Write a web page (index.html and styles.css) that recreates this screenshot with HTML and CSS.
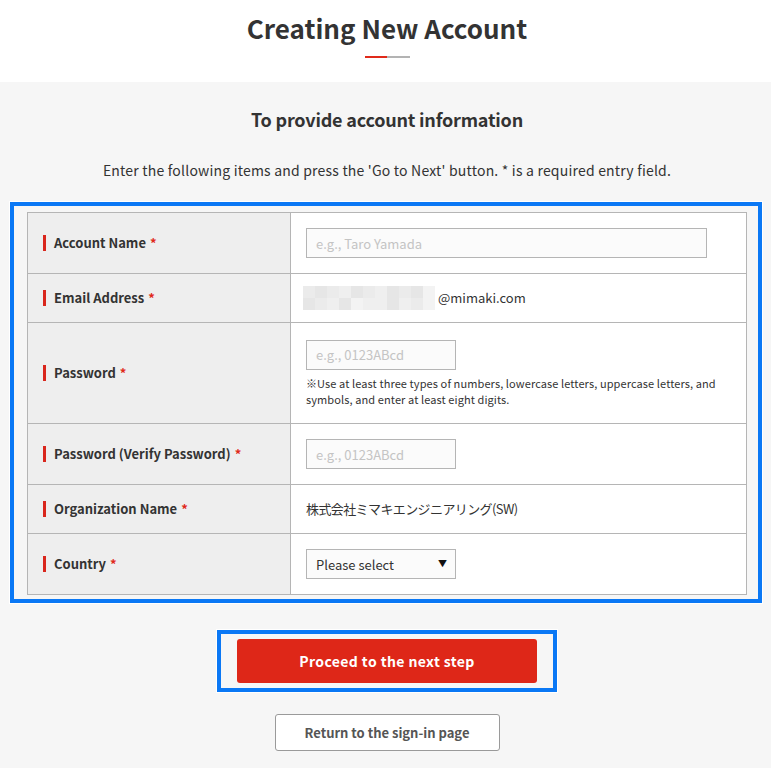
FILE: index.html
```html
<!DOCTYPE html>
<html lang="en">
<head>
<meta charset="utf-8">
<title>Creating New Account</title>
<link rel="stylesheet" href="styles.css">
</head>
<body>
<header class="page-header">
  <h1 class="page-title">Creating New Account</h1>
  <div class="title-rule"><span class="rule-red"></span><span class="rule-gray"></span></div>
</header>
<main class="page-main">
  <h2 class="section-title">To provide account information</h2>
  <p class="lead">Enter the following items and press the 'Go to Next' button. * is a required entry field.</p>
  <div class="focus-box form-box">
    <div class="form-grid">
      <div class="cell label row-61"><span class="bar"></span>Account Name <span class="req">*</span></div>
      <div class="cell value row-61"><input class="text-input wide" type="text" placeholder="e.g., Taro Yamada"></div>

      <div class="cell label row-49"><span class="bar"></span>Email Address <span class="req">*</span></div>
      <div class="cell value row-49 text-cell">
        <span class="blur">
          <span class="px p1"></span><span class="px p2"></span><span class="px p1"></span><span class="px p3"></span><span class="px p2"></span><span class="px p1"></span><span class="px p3"></span><span class="px p2"></span><span class="px p1"></span><span class="px p2"></span><span class="px p4"></span>
          <span class="px p2"></span><span class="px p1"></span><span class="px p3"></span><span class="px p2"></span><span class="px p4"></span><span class="px p3"></span><span class="px p3"></span><span class="px p2"></span><span class="px p3"></span><span class="px p1"></span><span class="px p4"></span>
        </span><span class="email-domain">@mimaki.com</span>
      </div>

      <div class="cell label row-101"><span class="bar"></span>Password <span class="req">*</span></div>
      <div class="cell value row-101 stack">
        <input class="text-input narrow" type="password" placeholder="e.g., 0123ABcd">
        <p class="note">※Use at least three types of numbers, lowercase letters, uppercase letters, and symbols, and enter at least eight digits.</p>
      </div>

      <div class="cell label row-61"><span class="bar"></span>Password (Verify Password) <span class="req">*</span></div>
      <div class="cell value row-61"><input class="text-input narrow" type="password" placeholder="e.g., 0123ABcd"></div>

      <div class="cell label row-49"><span class="bar"></span>Organization Name <span class="req">*</span></div>
      <div class="cell value row-49 text-cell"><span class="org">株式会社ミマキエンジニアリング(SW)</span></div>

      <div class="cell label row-61"><span class="bar"></span>Country <span class="req">*</span></div>
      <div class="cell value row-61">
        <div class="select-wrap">
          <select class="select">
            <option>Please select</option>
          </select>
          <span class="select-arrow">▼</span>
        </div>
      </div>
    </div>
  </div>

  <div class="actions">
    <div class="focus-box btn-box">
      <button class="btn-primary" type="button">Proceed to the next step</button>
    </div>
    <button class="btn-secondary" type="button">Return to the sign-in page</button>
  </div>
</main>
</body>
</html>
```
FILE: styles.css
```css
* { box-sizing: border-box; }

html, body {
  margin: 0;
  padding: 0;
}

body {
  font-family: "Noto Sans CJK JP", "Noto Sans", sans-serif;
  color: #333;
  background: #f6f6f6;
  padding-left: 3px;
}

.page-header {
  background: #fff;
  margin-left: -3px;
  padding: 13px 0 24px 3px;
  display: flex;
  flex-direction: column;
  align-items: center;
}

.page-title {
  margin: 0;
  font-size: 26px;
  line-height: 30px;
  font-weight: bold;
  color: #333;
}

.title-rule {
  margin-top: 13px;
  display: flex;
  height: 2px;
}
.rule-red { width: 22px; background: #e02a1a; }
.rule-gray { width: 23px; background: #b3b3b3; }

.page-main {
  padding-top: 25px;
  padding-bottom: 16px;
}

.section-title {
  margin: 0;
  text-align: center;
  font-size: 18px;
  line-height: 24px;
  font-weight: bold;
  letter-spacing: -0.2px;
}

.lead {
  margin: 29px 0 0;
  text-align: center;
  font-size: 14px;
  line-height: 20px;
  letter-spacing: 0.2px;
}

.focus-box {
  border: 4px solid #0a78f5;
  box-shadow: 0 0 0 1px #fff;
}

.form-box {
  margin: 22px 9px 0 7px;
  padding: 6px 11px 4px 13px;
}

.form-grid {
  display: grid;
  grid-template-columns: 263px 456px;
  border-top: 1px solid #b5b5b5;
  border-left: 1px solid #b5b5b5;
}

.cell {
  border-right: 1px solid #b5b5b5;
  border-bottom: 1px solid #b5b5b5;
  display: flex;
  align-items: center;
  padding-left: 15px;
}

.row-61 { height: 61px; }
.row-49 { height: 49px; }
.row-101 { height: 101px; }

.label {
  background: #eeeeee;
  font-size: 13px;
  font-weight: bold;
  color: #333;
  padding-bottom: 2px;
}

.label .bar { margin-top: 2px; }

.label .req {
  color: #e02a1a;
  margin-left: 4px;
}

.bar {
  width: 3px;
  height: 16px;
  background: #d9261c;
  margin-right: 8px;
}

.value {
  background: #fff;
  font-size: 13px;
}

.text-cell { padding-bottom: 2px; }

.stack {
  flex-direction: column;
  align-items: flex-start;
  justify-content: center;
}

.text-input {
  height: 30px;
  border: 1px solid #b5b5b5;
  background: #fbfbfb;
  font-family: inherit;
  font-size: 13px;
  padding: 0 9px;
  color: #333;
  border-radius: 0;
  outline: none;
}
.text-input::placeholder { color: #c4c4c4; }
.wide { width: 401px; }
.narrow { width: 150px; }

.note {
  margin: 5px 0 0;
  font-size: 11px;
  line-height: 16px;
  color: #333;
  padding-right: 20px;
  letter-spacing: 0.1px;
}

.blur {
  display: grid;
  grid-template-columns: repeat(11, 12px);
  grid-auto-rows: 12px;
  width: 133px;
  margin-left: -3px;
  margin-top: 2px;
  overflow: hidden;
}
.px.p1 { background: #ebebeb; }
.px.p2 { background: #e6e6e6; }
.px.p3 { background: #efefef; }
.px.p4 { background: #f3f3f3; }

.email-domain {
  margin-left: 2px;
  font-size: 13px;
}

.org {
  font-size: 13px;
  letter-spacing: -0.6px;
}

.select-wrap {
  position: relative;
  width: 150px;
  height: 30px;
}
.select {
  appearance: none;
  -webkit-appearance: none;
  width: 150px;
  height: 30px;
  border: 1px solid #b5b5b5;
  background: #fbfbfb;
  border-radius: 0;
  font-family: inherit;
  font-size: 13px;
  color: #333;
  padding: 0 9px;
}
.select-arrow {
  position: absolute;
  right: 9px;
  top: 7px;
  font-size: 9px;
  line-height: 16px;
  color: #111;
  pointer-events: none;
}

.actions {
  display: flex;
  flex-direction: column;
  align-items: center;
}

.btn-box {
  margin-top: 27px;
  padding: 5px 16px 5px 16px;
}

.btn-primary {
  display: block;
  width: 300px;
  height: 44px;
  border: none;
  border-radius: 3px;
  background: #de2718;
  color: #fff;
  font-family: inherit;
  font-size: 14px;
  font-weight: bold;
  letter-spacing: 0.4px;
  padding-bottom: 2px;
}

.btn-secondary {
  margin-top: 22px;
  width: 225px;
  height: 37px;
  border: 1px solid #9a9a9a;
  border-radius: 3px;
  background: #fff;
  color: #555;
  font-family: inherit;
  font-size: 13px;
  font-weight: bold;
  padding-bottom: 2px;
}
```
